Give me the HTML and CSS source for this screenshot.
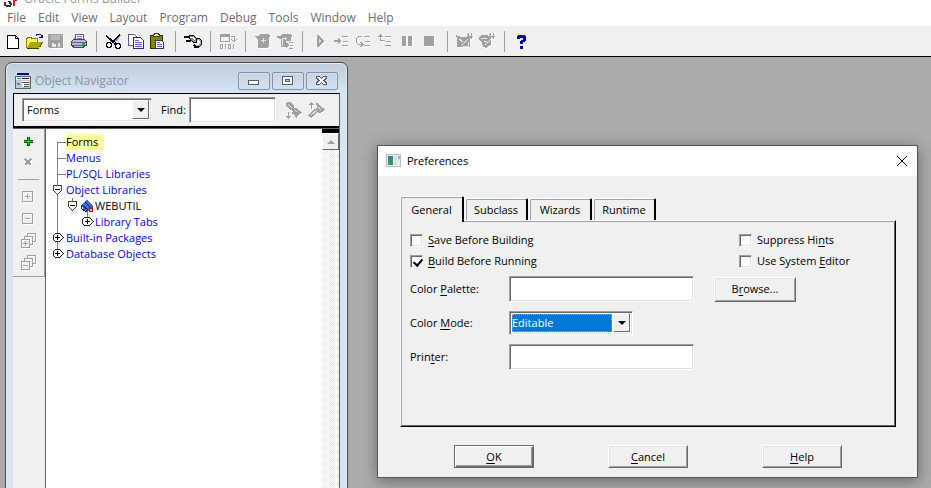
FILE: index.html
```html
<!DOCTYPE html>
<html lang="en">
<head>
    <meta charset="UTF-8">
    <meta name="viewport" content="width=device-width, initial-scale=1.0">
    <title>Oracle Forms Builder</title>
    <link rel="stylesheet" href="styles.css">
</head>
<body>
    <header class="app-title">
        <svg class="app-logo" viewBox="0 0 14 14"><path d="M1 9v3l2 1h3l1-2-2-3" fill="none" stroke="#333" stroke-width="2"/><path d="M9 6h2v7H9z" fill="#e02020"/><path d="M11 6h2v2h-2z" fill="#e02020"/></svg>
        <span>Oracle Forms Builder</span>
    </header>
    <nav class="menu-bar">
        <button type="button">File</button>
        <button type="button">Edit</button>
        <button type="button">View</button>
        <button type="button">Layout</button>
        <button type="button">Program</button>
        <button type="button">Debug</button>
        <button type="button">Tools</button>
        <button type="button">Window</button>
        <button type="button">Help</button>
    </nav>

    <div class="toolbar">
        <button type="button" aria-label="New"><svg viewBox="0 0 18 18"><path d="M3.5 3.5h8l3 3v10h-11z" fill="#fff" stroke="#000"/><path d="M11.5 3.5v3h3" fill="none" stroke="#000"/></svg></button>
        <button type="button" aria-label="Open"><svg viewBox="0 0 18 18"><path d="M.5 15.5v-9h1v-1h4v1h6v4" fill="#ffff40" stroke="#808000"/><path d="M1 16l3-6h13l-4 6z" fill="#a8a800"/><path d="M1 16.500h12M13.500 15.500l3-5.500" fill="none" stroke="#404000"/><path d="M10.500 4v-1.500h4l1 1V5M13 5.500h4M16.500 3v3" fill="none" stroke="#0000c0"/></svg></button>
        <button type="button" aria-label="Save" disabled><svg viewBox="0 0 18 18"><path d="M0 2h15v14H1l-1-1z"/><path d="M3 3h9v5H3z" fill="#b8b8b8"/><path d="M4 11h2v1h2v3H4zM10 11h2v4h-2z" fill="#e8e8e8"/><path d="M13 3h1v1h-1z" fill="#fff"/></svg></button>
        <button type="button" aria-label="Print"><svg viewBox="0 0 18 18"><path d="M4.500 8.500l1.500-6h8l-1 6z" fill="#fff" stroke="#606080"/><path d="M7 4.500h5M7 6.500h5" stroke="#8080c0"/><path d="M1.500 9.500l2-2h11l2 2v4h-2l-1 2h-10l-1-2h-1z" fill="#b8b8e0" stroke="#404060"/><path d="M2 10.500h14M3 13.500h11" stroke="#606080"/><path d="M12 11h3v2h-3z" fill="#00c000"/></svg></button>
        <i class="separator"></i>
        <button type="button" aria-label="Cut"><svg viewBox="0 0 18 18"><path d="M1 4l11 8M2 5l9 8M15 3L7 11" fill="none" stroke="#000" stroke-width="1.500"/><path d="M16 3L8 12" stroke="#9090ff"/><circle cx="4" cy="13" r="2.500" fill="none" stroke="#000" stroke-width="1.500"/><circle cx="13" cy="14" r="2.500" fill="none" stroke="#000" stroke-width="1.500"/></svg></button>
        <button type="button" aria-label="Copy"><svg viewBox="0 0 18 18"><path d="M1.500 2.500h6l2 2v9h-8z" fill="#fff" stroke="#606078"/><path d="M6.500 5.500h7l3 3v8h-10z" fill="#fff" stroke="#303070"/><path d="M8 8.500h4M8 10.500h7M8 12.500h7M8 14.500h7" stroke="#6060e0"/></svg></button>
        <button type="button" aria-label="Paste"><svg viewBox="0 0 18 18"><path d="M1.500 3.500h12v13h-12z" fill="#848400" stroke="#303000"/><path d="M4.500 4.500v-1l1-2h4l1 2v1z" fill="#ffff60" stroke="#404000"/><path d="M6.500 8.500h6l2 2v6h-8z" fill="#fff" stroke="#303070"/><path d="M8 10.500h3M8 12.500h5M8 14.500h5" stroke="#6060e0"/></svg></button>
        <i class="separator"></i>
        <button type="button" aria-label="Connect"><svg viewBox="0 0 18 18"><path d="M0 4h5v2H0zM2 8h5v2H2z" fill="#000"/><path d="M5.500 3.500h4l3 3v4h-3l-4-4z" fill="#909090" stroke="#000"/><path d="M6 5h3l2 3" fill="none" stroke="#fff"/><path d="M12 6.500h3l2 2v4l-2 2h-4l-1-2" fill="none" stroke="#000" stroke-width="2"/><path d="M13 7.500h2l1 1v4l-1 1h-3" fill="none" stroke="#a0a0d0"/></svg></button>
        <i class="separator"></i>
        <button type="button" aria-label="Compile" disabled><svg viewBox="0 0 18 18"><path d="M1 2h10v8H1z"/><path d="M2 5h8v4H2z" fill="#f0f0f0"/><path d="M12 4.500h3v5M12.500 7.500l2.500 2.500 2.500-2.500" fill="none" stroke="#a0a0a0"/><path d="M1.500 12.500h2v4h-2zM9.500 12.500h2v4h-2zM6.500 12v5M14.500 12v5" fill="none" stroke="#a0a0a0"/></svg></button>
        <i class="separator"></i>
        <button type="button" aria-label="Run Form" disabled><svg viewBox="0 0 18 18"><path d="M4 4l2-2h8l1 1h1v2h-1v9l-2 2H4V7H3V6H2V5H1V4z"/><path d="M9.500 6v5M7 8.500h5" stroke="#e8e8e8"/></svg></button>
        <button type="button" aria-label="Run Form Debug" disabled><svg viewBox="0 0 18 18"><path d="M4 4l2-2h8l1 1h1v2h-1v4h-5v6H5V7H3V6H1V4z"/><path d="M9.500 5v3M7 6.500h4M6.500 6v8" stroke="#e8e8e8"/><path d="M10 10h1l2 3-2 3h-1zM13 10h4v1h-4zM14 13h3v1h-3zM13 16h4v1h-4z"/></svg></button>
        <i class="separator"></i>
        <button type="button" aria-label="Go" disabled><svg viewBox="0 0 18 18"><path d="M6 3h1l6 6-6 6H6z"/><path d="M8 7l2 2-2 2z" fill="#d8d8d8"/></svg></button>
        <button type="button" aria-label="Step Into" disabled><svg viewBox="0 0 18 18"><path d="M1 8h4V6l3 3-3 3v-2H1zM9 4h6v1H9zM10 9h5v1h-5zM9 13h6v1H9z"/></svg></button>
        <button type="button" aria-label="Step Over" disabled><svg viewBox="0 0 18 18"><path d="M7 4.500H3.500l-2 2v4l2 2h4M5.500 10l2.500 2.500L5.500 15" fill="none" stroke="#a0a0a0"/><path d="M9 4h6v1H9zM10 9h5v1h-5zM9 13h6v1H9z"/></svg></button>
        <button type="button" aria-label="Step Out" disabled><svg viewBox="0 0 18 18"><path d="M0 5l3-3 3 3zM3 5h1v3h4v1H3zM8 4h6v1H8zM9 9h5v1H9zM8 13h6v1H8z"/></svg></button>
        <button type="button" aria-label="Pause" disabled><svg viewBox="0 0 18 18"><path d="M3 4h4v10H3zM9 4h4v10H9z"/></svg></button>
        <button type="button" aria-label="Stop" disabled><svg viewBox="0 0 18 18"><path d="M3 4h10v10H3z"/></svg></button>
        <i class="separator"></i>
        <button type="button" aria-label="Layout Wizard" disabled><svg viewBox="0 0 18 18"><path d="M0 3l5 2h5l2-2 2 3v9H1V7z"/><path d="M5 14l7-7M3 7l4 3M7 14h5v-4" fill="none" stroke="#e8e8e8"/><path d="M12.500 1v6M11 4.500h6M15.500 1v6M11 2l5 5" stroke="#a0a0a0"/></svg></button>
        <button type="button" aria-label="Data Block Wizard" disabled><svg viewBox="0 0 18 18"><path d="M1 5l3-2h6l3 4v6l-5 3-3-1-1-5-3-2z"/><path d="M7 13l6-6M3 6h6M6 9h3" stroke="#e8e8e8"/><path d="M12.500 1v6M10 4.500h7M15.500 1v6M11 2l5 5" stroke="#a0a0a0"/></svg></button>
        <i class="separator"></i>
        <button type="button" aria-label="Help"><svg viewBox="0 0 18 18"><path d="M5.500 7V5l1-1h4l1 1v3l-3 2v2" fill="none" stroke="#0000d0" stroke-width="3"/><path d="M7 14h3v3H7z" fill="#0000d0"/></svg></button>
    </div>

    <main class="workspace">
        <section class="navigator">
            <div class="navigator-title">
                <svg class="title-icon" viewBox="0 0 16 16"><path d="M0 0h16v16H0z" fill="#d8d8d8"/><path d="M2 0h12v2H2z" fill="#0000b0"/><path d="M.5 3.500h15v12H.5z" fill="#c8c8c8" stroke="#606060"/><path d="M1 4h14v3H1z" fill="#fff"/><path d="M2 5h4v1H2zM2 10h3v2H2z" fill="#00b0b0"/><path d="M7 5.500h7" stroke="#202020"/><path d="M7 8h7v6H7z" fill="#fff"/><path d="M7 9.500h7M9 11.500h5M9 13.500h5" stroke="#505050"/></svg>
                <h2>Object Navigator</h2>
                <div class="window-buttons">
                    <button type="button" aria-label="Minimize"><svg viewBox="0 0 14 12"><rect x="1.500" y="5.500" width="10" height="4" rx="1" fill="#fff" stroke="#555a6a"/></svg></button>
                    <button type="button" aria-label="Restore"><svg viewBox="0 0 14 12"><rect x="1.500" y="1.500" width="10" height="8" fill="#fff" stroke="#555a6a"/><rect x="4.500" y="4.500" width="4" height="2" fill="#c6d4e6" stroke="#555a6a"/></svg></button>
                    <button type="button" aria-label="Close"><svg viewBox="0 0 14 12"><path d="M1.500 1.500h3L6.500 3.500l2-2h3v1.500L9 5.500 11.500 8v1.500h-3l-2-2-2 2h-3V8L4 5.500 1.500 3z" fill="#fff" stroke="#555a6a"/></svg></button>
                </div>
            </div>
            <div class="navigator-frame">
                <div class="find-bar">
                    <div class="combo type-combo">
                        <select aria-label="Object type"><option>Forms</option></select>
                        <span class="combo-arrow"></span>
                    </div>
                    <label for="find">Find:</label>
                    <input type="text" id="find" class="text-box">
                    <button type="button" aria-label="Find next" disabled><svg viewBox="0 0 18 18"><path d="M1 2l2-1h2l4 4v2h3l1 2 4 2-2 2-2 1-1 3-2-1v-2l-3-1 1-3-3-1-4-5z"/><path d="M3 3l4 4M10 9l2 2" stroke="#e8e8e8"/><path d="M3 11h1v4h2l-3 3-2-3h2z"/></svg></button>
                    <button type="button" aria-label="Find previous" disabled><svg viewBox="0 0 18 18"><path d="M8 2l3 1 2 3 4 2-2 3-4 1-2-1-5 6-3-1-1-2 7-6 2-2z"/><path d="M3 14l6-5M10 6l3 3" stroke="#e8e8e8"/><path d="M3 1l3 3H4v4H3V4H1z"/></svg></button>
                </div>
                <div class="navigator-body">
                    <div class="side-column">
                        <div class="side-tools">
                            <button type="button" aria-label="Create"><svg viewBox="0 0 18 18"><path d="M7 5h3v3h3v3h-3v3H7v-3H4V8h3z" fill="#005000"/><path d="M8 5h1v4h4v1H9v3H8v-3H4V9h4z" fill="#00e800"/></svg></button>
                            <button type="button" aria-label="Delete" disabled><svg viewBox="0 0 18 18"><path d="M5 5l6 6M11 5l-6 6" stroke="#a0a0a0" stroke-width="2"/></svg></button>
                            <hr>
                            <button type="button" aria-label="Expand" disabled><svg viewBox="0 0 18 18"><path d="M2.500 3.500h10v10h-10zM5 8.500h5M7.500 6v5" fill="none" stroke="#a0a0a0"/></svg></button>
                            <button type="button" aria-label="Collapse" disabled><svg viewBox="0 0 18 18"><path d="M2.500 3.500h10v10h-10zM5 8.500h5" fill="none" stroke="#a0a0a0"/></svg></button>
                            <button type="button" aria-label="Expand All" disabled><svg viewBox="0 0 18 18"><path d="M1.500 7.500h8v8h-8zM3 11.500h5M5.500 9v5M4.500 7V4.500h8v8h-3M7.500 4V1.500h8v8h-3" fill="none" stroke="#a0a0a0"/></svg></button>
                            <button type="button" aria-label="Collapse All" disabled><svg viewBox="0 0 18 18"><path d="M1.500 7.500h8v8h-8zM3 11.500h5M4.500 7V4.500h8v8h-3M7.500 4V1.500h8v8h-3" fill="none" stroke="#a0a0a0"/></svg></button>
                        </div>
                    </div>
                    <ul class="tree">
                        <li><svg class="branch" viewBox="0 0 14 16"><path d="M5.500 16V8.500H14" fill="none" stroke="#808080"/></svg><span class="selected">Forms</span></li>
                        <li><svg class="branch" viewBox="0 0 14 16"><path d="M5.500 0v16M5.500 8.500H14" stroke="#808080"/></svg><span>Menus</span></li>
                        <li><svg class="branch" viewBox="0 0 14 16"><path d="M5.500 0v16M5.500 8.500H14" stroke="#808080"/></svg><span>PL/SQL Libraries</span></li>
                        <li><svg class="branch" viewBox="0 0 14 16"><path d="M5.500 0v16" stroke="#808080"/><path d="M1.500 3.500h8v5l-4 4-4-4z" fill="#fff" stroke="#404040"/><path d="M3 7.500h5" stroke="#000"/></svg><span>Object Libraries</span></li>
                        <li><svg class="branch" viewBox="0 0 14 16"><path d="M5.500 0v16" stroke="#808080"/></svg><svg class="branch" viewBox="0 0 14 16"><path d="M6.500 0v3" stroke="#808080"/><path d="M2.500 3.500h8v5l-4 4-4-4z" fill="#fff" stroke="#404040"/><path d="M4 7.500h5" stroke="#000"/></svg><svg class="book" viewBox="0 0 15 16"><path d="M7.500 12v4" stroke="#808080"/><path d="M1 7l6-5 6 6-5 5H5z" fill="#4070d8"/><path d="M1 7v3l5 4 2-2-6-5M5 4l5 5" fill="none" stroke="#101870"/><path d="M9 9h4v5H9z" fill="#e00020"/><path d="M10 11h2v2h-2z" fill="#ffe000"/></svg><span class="module">WEBUTIL</span></li>
                        <li><svg class="branch" viewBox="0 0 14 16"><path d="M5.500 0v16" stroke="#808080"/></svg><svg class="branch" viewBox="0 0 14 16"></svg><svg class="book" viewBox="0 0 15 16"><path d="M7.500 0v4" stroke="#808080"/><path d="M4.500 3.500h5l4 4-4 4h-5l-2-2v-4z" fill="#fff" stroke="#202020"/><path d="M5 7.500h5M7.500 5v5" stroke="#000"/></svg><span>Library Tabs</span></li>
                        <li><svg class="branch" viewBox="0 0 14 16"><path d="M5.500 0v16" stroke="#808080"/><path d="M3.500 3.500h4l4 4-4 4h-4l-2-2v-4z" fill="#fff" stroke="#202020"/><path d="M3 7.500h5M5.500 5v5" stroke="#000"/></svg><span>Built-in Packages</span></li>
                        <li><svg class="branch" viewBox="0 0 14 16"><path d="M5.500 0v4" stroke="#808080"/><path d="M3.500 3.500h4l4 4-4 4h-4l-2-2v-4z" fill="#fff" stroke="#202020"/><path d="M3 7.500h5M5.500 5v5" stroke="#000"/></svg><span>Database Objects</span></li>
                    </ul>
                    <div class="scrollbar">
                        <button type="button" aria-label="Scroll up"></button>
                    </div>
                </div>
            </div>
        </section>

        <section class="dialog" role="dialog" aria-labelledby="dialog-title">
            <div class="dialog-title">
                <svg class="title-icon" viewBox="0 0 16 16"><path d="M.5 1.500h14v12H.5z" fill="#e8ecf0" stroke="#b8c0c8"/><path d="M2 3h5v9H2z" fill="#3f8f76"/><path d="M2 3h3v4H2z" fill="#4878a8"/><path d="M8 3h3v9H8z" fill="#dcdfe2"/><path d="M12 3h2v3h-2z" fill="#90b8c0"/></svg>
                <h2 id="dialog-title">Preferences</h2>
                <button type="button" class="close-button" aria-label="Close"><svg viewBox="0 0 12 12"><path d="M1 1l10 10M11 1L1 11" stroke="#000"/></svg></button>
            </div>
            <form class="dialog-body">
                <div class="tabs" role="tablist">
                    <button type="button" role="tab" class="active" aria-selected="true">General</button>
                    <button type="button" role="tab">Subclass</button>
                    <button type="button" role="tab">Wizards</button>
                    <button type="button" role="tab">Runtime</button>
                </div>
                <div class="panel">
                    <div class="checks">
                        <label><input type="checkbox"><span><u>S</u>ave Before Building</span></label>
                        <label><input type="checkbox"><span>Suppress Hi<u>n</u>ts</span></label>
                        <label><input type="checkbox" checked><span><u>B</u>uild Before Running</span></label>
                        <label><input type="checkbox"><span>Use System <u>E</u>ditor</span></label>
                    </div>
                    <div class="field">
                        <label for="palette">Color <u>P</u>alette:</label>
                        <input type="text" id="palette" class="text-box">
                        <button type="button" class="push-button">B<u>r</u>owse...</button>
                    </div>
                    <div class="field">
                        <label for="mode">Color <u>M</u>ode:</label>
                        <div class="combo focused">
                            <select id="mode"><option>Editable</option></select>
                            <span class="combo-arrow"></span>
                        </div>
                    </div>
                    <div class="field">
                        <label for="printer">Prin<u>t</u>er:</label>
                        <input type="text" id="printer" class="text-box">
                    </div>
                </div>
                <div class="dialog-buttons">
                    <button type="button" class="push-button default"><u>O</u>K</button>
                    <button type="button" class="push-button"><u>C</u>ancel</button>
                    <button type="button" class="push-button"><u>H</u>elp</button>
                </div>
            </form>
        </section>
    </main>
</body>
</html>
```
FILE: styles.css
```css
* {
    box-sizing: border-box;
}

body {
    margin: 0;
    height: 100vh;
    display: flex;
    flex-direction: column;
    overflow: hidden;
    background-color: #fff;
    font-family: "Open Sans", "Noto Sans", sans-serif;
    font-size: 11px;
    line-height: 16px;
    color: #000;
}

button,
input,
select {
    font: inherit;
    color: inherit;
    margin: 0;
    padding: 0;
    border: none;
    border-radius: 0;
    background: none;
}

h2 {
    margin: 0;
    font-size: 11px;
    font-weight: normal;
}

svg {
    display: block;
    flex: none;
    shape-rendering: crispEdges;
}

u {
    text-underline-offset: 2px;
}

/* application frame */
.app-title {
    height: 7px;
    flex: none;
    display: flex;
    align-items: flex-end;
    gap: 6px;
    padding-left: 4px;
    overflow: hidden;
    font-size: 12px;
    color: #999;
}

.app-logo {
    width: 14px;
    height: 14px;
}

.menu-bar {
    height: 19px;
    flex: none;
    display: flex;
    align-items: center;
    gap: 12px;
    padding: 3px 7px 0;
    font-size: 12px;
    color: #6d6d6d;
}

.toolbar {
    height: 31px;
    flex: none;
    display: flex;
    align-items: center;
    padding-left: 2px;
    background-color: #f0f0f0;
    border-bottom: 1px solid #000;
}

.toolbar button,
.find-bar button,
.side-tools button {
    width: 22px;
    height: 22px;
    display: flex;
    align-items: center;
    justify-content: center;
}

.toolbar svg,
.find-bar svg,
.side-tools svg {
    width: 18px;
    height: 18px;
}

button:disabled svg {
    fill: #a0a0a0;
    filter: drop-shadow(1px 1px 0 #fff);
}

.separator {
    width: 1px;
    height: 21px;
    margin: 0 6px;
    background-color: #a0a0a0;
}

.workspace {
    position: relative;
    flex: 1;
    background-color: #ababab;
    overflow: hidden;
}

/* shared controls */
.text-box,
.combo {
    height: 26px;
    background-color: #fff;
    border: 1px solid;
    border-color: #a0a0a0 #fff #fff #a0a0a0;
    box-shadow: inset 1px 1px 0 #696969, inset -1px -1px 0 #e3e3e3;
}

.text-box {
    padding: 0 4px;
}

.combo {
    display: flex;
    width: 124px;
    height: 24px;
    padding: 1px 2px 2px;
}

.combo select {
    flex: 1;
    min-width: 0;
    appearance: none;
    padding-left: 2px;
}

.combo.focused select {
    margin: 1px 1px 0 0;
    padding: 0;
    background-color: #0078d7;
    color: #fff;
    outline: 1px dotted #ff8728;
    outline-offset: -1px;
}

.combo-arrow {
    width: 17px;
    display: flex;
    align-items: center;
    justify-content: center;
    background-color: #f0f0f0;
    border: 1px solid;
    border-color: #fff #696969 #696969 #fff;
}

.combo-arrow::after {
    content: "";
    border: 4px solid transparent;
    border-top-color: #000;
    border-bottom: none;
}

.push-button {
    width: 80px;
    height: 23px;
    background-color: #f0f0f0;
    border: 1px solid;
    border-color: #fff #696969 #696969 #fff;
    box-shadow: inset 1px 1px 0 #e3e3e3, inset -1px -1px 0 #a0a0a0;
}

.push-button.default {
    border-color: #696969;
    box-shadow: inset 1px 1px 0 #fff, inset -1px -1px 0 #696969, inset -2px -2px 0 #a0a0a0;
}

.title-icon {
    width: 16px;
    height: 16px;
}

/* object navigator */
.navigator {
    position: absolute;
    left: 5px;
    top: 5px;
    bottom: -10px;
    width: 343px;
    display: flex;
    flex-direction: column;
    padding: 0 7px 8px;
    background: linear-gradient(#bfcddb, #d7e4f2 30px);
    border: 1px solid #4a4a4a;
    border-radius: 7px;
    box-shadow: inset 0 0 0 1px #e4edf6;
}

.navigator-title {
    height: 30px;
    flex: none;
    display: flex;
    align-items: center;
    gap: 4px;
    padding: 6px 2px 0;
    color: #8c949c;
}

.navigator-title h2 {
    font-size: 12px;
}

.window-buttons {
    display: flex;
    gap: 2px;
    margin-left: auto;
}

.window-buttons button {
    width: 32px;
    height: 18px;
    display: flex;
    align-items: center;
    justify-content: center;
    border: 1px solid #8392ae;
    border-radius: 2px;
    box-shadow: inset 0 0 0 1px #d5e0ed;
}

.window-buttons svg {
    width: 14px;
    height: 12px;
}

.navigator-frame {
    flex: 1;
    display: flex;
    flex-direction: column;
    border-top: 1px solid #000;
    border-right: 1px solid #606060;
}

.find-bar {
    height: 34px;
    flex: none;
    display: flex;
    align-items: center;
    padding: 0 8px;
    background-color: #f0f0f0;
    border-left: 1px solid #000;
    border-bottom: 2px solid #000;
}

.type-combo {
    width: 130px;
}

.find-bar label {
    margin: 0 3px 0 9px;
}

.find-bar .text-box {
    width: 87px;
    margin-right: 7px;
}

.find-bar button + button {
    margin-left: 1px;
}

.navigator-body {
    flex: 1;
    display: flex;
    background-color: #fff;
    border-top: 1px solid #606060;
}

.side-column {
    width: 32px;
    background-color: #f0f0f0;
}

.side-tools {
    display: flex;
    flex-direction: column;
    align-items: center;
    padding: 1px 0 2px;
    border-right: 1px solid #a0a0a0;
    border-bottom: 1px solid #a0a0a0;
}

.side-tools hr {
    width: 21px;
    height: 1px;
    margin: 5px 0 6px;
    border: none;
    background-color: #a0a0a0;
}

.tree {
    flex: 1;
    margin: 0;
    padding: 5px 0 0 6px;
    list-style: none;
    border-left: 1px solid #606060;
    color: #0000ff;
}

.tree li {
    display: flex;
    height: 16px;
    white-space: nowrap;
}

.branch {
    width: 14px;
    height: 16px;
}

.book {
    width: 15px;
    height: 16px;
}

.tree .selected {
    padding-right: 5px;
    background-color: #ffff99;
    color: #000;
}

.tree .module {
    color: #000;
}

.scrollbar {
    width: 17px;
    border-top: 4px solid #000;
    background: repeating-conic-gradient(#fff 0 25%, #ededed 0 50%) 0 0 / 2px 2px;
}

.scrollbar button {
    width: 17px;
    height: 17px;
    display: flex;
    align-items: center;
    justify-content: center;
    background-color: #f0f0f0;
    border: 1px solid;
    border-color: #fff #696969 #696969 #fff;
}

.scrollbar button::after {
    content: "";
    border: 4px solid transparent;
    border-top: none;
    border-bottom-color: #a0a0a0;
}

/* preferences dialog */
.dialog {
    position: absolute;
    left: 377px;
    top: 88px;
    width: 541px;
    background-color: #f0f0f0;
    border: 1px solid #555;
    box-shadow: 0 3px 14px rgba(0, 0, 0, 0.4);
}

.dialog-title {
    height: 30px;
    display: flex;
    align-items: center;
    gap: 5px;
    padding: 0 9px 0 8px;
    background-color: #fff;
}

.close-button {
    margin-left: auto;
}

.close-button svg {
    width: 12px;
    height: 12px;
    shape-rendering: auto;
}

.dialog-body {
    padding: 20px 21px 9px 22px;
}

.tabs {
    display: flex;
    align-items: flex-end;
    gap: 1px;
}

.tabs button {
    width: 63px;
    height: 22px;
    background-color: #f0f0f0;
    border: 1px solid #fff;
    border-right: 2px solid #000;
    border-bottom: none;
    border-radius: 2px 2px 0 0;
    box-shadow: inset 1px 1px 0 #a0a0a0;
}

.tabs .active {
    position: relative;
    width: 64px;
    height: 26px;
    margin-bottom: -2px;
}

.panel {
    height: 207px;
    padding: 11px 0 0 9px;
    border: 1px solid;
    border-color: #fff #000 #000 #fff;
    box-shadow: inset 1px 1px 0 #a0a0a0, inset -1px -1px 0 #696969;
}

.checks {
    display: grid;
    grid-template-columns: 1fr 156px;
    row-gap: 5px;
    margin-bottom: 7px;
}

.checks label {
    display: flex;
    align-items: center;
    gap: 5px;
}

.checks input {
    appearance: none;
    width: 13px;
    height: 13px;
    background-color: #fff;
    border: 1px solid;
    border-color: #a0a0a0 #fff #fff #a0a0a0;
    box-shadow: inset 1px 1px 0 #696969, inset -1px -1px 0 #e3e3e3;
}

.checks input:checked::after {
    content: "";
    display: block;
    width: 4px;
    height: 7px;
    margin: 1px 0 0 4px;
    border: solid #000;
    border-width: 0 2px 2px 0;
    transform: rotate(40deg);
}

.field {
    display: flex;
    align-items: center;
    height: 26px;
    margin-bottom: 8px;
}

.field label {
    width: 99px;
}

.field .text-box {
    width: 185px;
    margin-right: 20px;
}

.field .push-button {
    width: 82px;
    height: 25px;
}

.dialog-buttons {
    display: flex;
    justify-content: center;
    gap: 74px;
    padding-top: 18px;
}
```
